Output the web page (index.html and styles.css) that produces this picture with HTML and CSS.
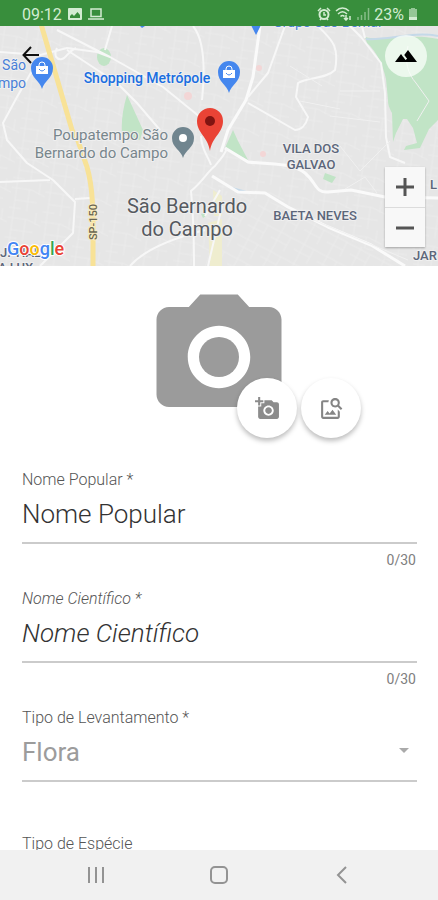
FILE: index.html
```html
<!DOCTYPE html>
<html lang="pt-BR">
<head>
  <meta charset="utf-8">
  <meta name="viewport" content="width=device-width, initial-scale=1">
  <title>Levantamento</title>
  <link rel="stylesheet" href="styles.css">
</head>
<body>
  <header class="status-bar">
    <div class="status-left">
      <span>09:12</span>
      <svg width="14" height="14" viewBox="0 0 14 14"><path fill="currentColor" fill-rule="evenodd" d="M1 1h12a1 1 0 0 1 1 1v10a1 1 0 0 1-1 1H1a1 1 0 0 1-1-1V2a1 1 0 0 1 1-1zM2 11h10V8L9.500 5 6 9 4 7 2 9z"/></svg>
      <svg width="16" height="14" viewBox="0 0 16 14"><path fill="none" stroke="currentColor" stroke-width="1.500" d="M3 2h10v7.500H3zM0 12h16"/></svg>
    </div>
    <div class="status-right">
      <svg width="14" height="14" viewBox="0 0 14 14"><circle cx="7" cy="7.500" r="4.500" fill="none" stroke="currentColor" stroke-width="2"/><path fill="none" stroke="currentColor" stroke-width="1.500" d="M1 4l3-3M13 4l-3-3M3 13l1.500-2M11 13l-1.500-2M7 5v3h2"/></svg>
      <svg width="17" height="14" viewBox="0 0 17 14"><path fill="none" stroke="currentColor" stroke-width="1.500" d="M1 4c4-4 9-4 13 0M3 7c3-3 6-3 9 0M5.500 9.500c1.500-1.500 2.500-1.500 4 0M11 8v5M9 11l2 2 2-2M15 13V9"/></svg>
      <svg width="14" height="14" viewBox="0 0 14 14"><path stroke="currentColor" stroke-width="1.500" opacity=".5" d="M2 13v-3M5.500 13V8M9 13V5M12.500 13V1"/></svg>
      <span>23%</span>
      <svg width="10" height="14" viewBox="0 0 10 14"><path fill="currentColor" opacity=".6" d="M3 1h4v1h2v11H1V2h2z"/><path fill="currentColor" d="M1 10h8v3H1z"/></svg>
    </div>
  </header>

  <main class="screen">
    <section class="map">
      <svg class="map-canvas" viewBox="0 0 438 240" preserveAspectRatio="xMidYMid slice">
        <defs>
          <pattern id="blocks" width="34" height="30" patternUnits="userSpaceOnUse" patternTransform="rotate(8)">
            <path class="street" d="M0 8h20l14 5M5 0v30M18 8v22M5 20h22M28 0v12M0 28h12"/>
          </pattern>
          <pattern id="blocks-tilt" width="26" height="22" patternUnits="userSpaceOnUse" patternTransform="rotate(28)">
            <path class="street" d="M0 6h26M0 15h18M7 0v22M18 6v16"/>
          </pattern>
        </defs>
        <rect class="land" width="438" height="240"/>
        <rect fill="url(#blocks)" width="438" height="240"/>
        <path class="land" d="M225 165l63 16 110 59H205z"/>
        <path fill="url(#blocks-tilt)" d="M225 165l63 16 110 59H205z"/>

        <!-- parks -->
        <path class="park" d="M365 11c20 5 45-4 73 2v81l-9 9-9 19-16 2 2-4 11-3-4-15-6-9h-4l-7 14-3 9-1-29c-3-6-4-8-4-13l-2-21c-3-14-9-27-19-36z"/>
        <path class="park" d="M127 69l16 35-3 10-18-6c-1-13 1-26 5-39zM233 104l5 11 10 19-23-12zM325 147l11 4-4 6-9-4zM201 188l6-2-1 4-3 2z"/>
        <ellipse class="park" cx="104" cy="31" rx="7" ry="9"/>
        <path class="water" d="M366 13c20 2 48-8 72-3M232 162l18 5h16"/>
        <path class="urban" d="M213 164l9 6v20h-8zM208 197l14-4v47h-12z"/>
        <circle class="rose" cx="188" cy="70" r="4"/>
        <circle class="rose" cx="259" cy="42" r="3"/>
        <circle class="rose" cx="263" cy="128" r="3"/>

        <!-- roads -->
        <path class="road" d="M0 26l40 3 27-7 30 4 13 5M57 4l53 27 53 30 37 30M67 24l50 33 20 20 23 27M112 0l-7 24M193 0c10 12 13 35 9 74M40 31L17 71 3 97l4 17 20 23 26 17 22 22-2 31-33 33M0 156l50-2M75 173l15-1M130 240c12-14 36-26 75-36M57 22c-4 8 0 12 5 11s6-8 14-11"/>
        <path class="road wide" d="M260 0l-7 51-7 23-18 30-7 22M225 122l23 14c28 3 45 1 57 11s10 20 23 19l23-2 34 7 53 1M212 150l26 16 27 1 23 14 40 20 43 18 34 21"/>
        <path class="road" d="M285 0l-17 47-20 24M318 0c12 13 22 18 17 44-9 9-27 7-37 13l-2 14 12 20c-2 8-7 13-13 13l-47-27M350 0l11 11 20 26 4 30 1 44 4 20 15 6M365 12L362 0M194 240c0-40-1-55-3-75 12-10 17-20 24-25 6-8 10-11 12-18M201 110c0 13 7 20 10 29M205 190l15-26M222 180l-14 60"/>
        <path class="road thin" d="M408 20c-4 15 0 28 8 37l13 18-12 20M290 40l32 20M300 75l40 8M340 65h40M330 90l50 6M340 120l20 25 30-30M345 163l20-12 12 16M290 184l118 50"/>
        <path class="highway" d="M41 -2l31 106 5 8 10 29c7 24 6 49 6 101"/>

        <!-- pins -->
        <g class="pin-blue">
          <path d="M42 63c-2-8-11-11-11-21a11 11 0 0 1 22 0c0 10-9 13-11 21z"/>
          <path d="M229 67c-2-8-11-11-11-21a11 11 0 0 1 22 0c0 10-9 13-11 21z"/>
          <path d="M251 -1h10l-5 10zM140 0h5l-3 2z"/>
        </g>
        <path class="pin-bag" d="M36 40h12v8H36zM223 44h12v8h-12z"/>
        <path class="pin-handle" d="M39 40v-1a3 3 0 0 1 6 0v1M226 44v-1a3 3 0 0 1 6 0v1"/>
        <path class="pin-smile" d="M39 43q3 4 6 0M226 47q3 4 6 0"/>
        <path class="pin-gray" d="M183 132c-2-8-11-10-11-20a11 11 0 0 1 22 0c0 10-9 12-11 20z"/>
        <circle cx="183" cy="112" r="4" fill="#fff"/>
        <path class="pin-red" d="M210 125c-2-14-13-18-13-30a13 13 0 0 1 26 0c0 12-11 16-13 30z"/>
        <circle cx="210" cy="95" r="5" fill="#811411"/>

        <!-- labels -->
        <g class="label place">
          <text x="26" y="44" text-anchor="end">São</text>
          <text x="26" y="62" text-anchor="end">mpo</text>
          <text class="strong" x="147" y="57" text-anchor="middle">Shopping Metrópole</text>
          <text x="273" y="1">Grupo São Bernar</text>
        </g>
        <g class="label office" text-anchor="end">
          <text x="168" y="114">Poupatempo São</text>
          <text x="168" y="132">Bernardo do Campo</text>
        </g>
        <g class="label city" text-anchor="middle">
          <text x="187" y="187">São Bernardo</text>
          <text x="187" y="210">do Campo</text>
        </g>
        <g class="label district">
          <text x="311" y="127" text-anchor="middle">VILA DOS</text>
          <text x="311" y="143" text-anchor="middle">GALVAO</text>
          <text x="315" y="194" text-anchor="middle">BAETA NEVES</text>
          <text x="430" y="163">L</text>
          <text x="413" y="234">JAR</text>
          <text x="0" y="231">J. TIAL</text>
          <text x="-2" y="246">A LUX</text>
        </g>
        <text class="label route" transform="translate(97 196) rotate(-90)" text-anchor="middle">SP-150</text>
        <text class="label google" x="7" y="229"><tspan fill="#4285f4">G</tspan><tspan fill="#ea4335">o</tspan><tspan fill="#fbbc05">o</tspan><tspan fill="#4285f4">g</tspan><tspan fill="#34a853">l</tspan><tspan fill="#ea4335">e</tspan></text>
      </svg>

      <button class="back-button" type="button" aria-label="Voltar">
        <svg width="18" height="18" viewBox="0 0 18 18"><path fill="none" stroke="#111" stroke-width="2" d="M17 9H2M9 1L1.500 9 9 17"/></svg>
      </button>
      <button class="terrain-button" type="button" aria-label="Relevo">
        <svg width="24" height="24" viewBox="0 0 24 24"><path d="M14 6l-3.750 5 2.850 3.800-1.600 1.200C9.810 13.750 7 10 7 10l-6 8h22z"/></svg>
      </button>
      <div class="zoom-control">
        <button type="button" aria-label="Aproximar"><svg width="18" height="18" viewBox="0 0 18 18"><path d="M0 9h18M9 0v18"/></svg></button>
        <button type="button" aria-label="Afastar"><svg width="18" height="18" viewBox="0 0 18 18"><path d="M0 9h18"/></svg></button>
      </div>
    </section>

    <section class="photo">
      <svg class="photo-empty" viewBox="0 0 24 24"><path d="M9 2L7.170 4H4c-1.100 0-2 .9-2 2v12c0 1.100.9 2 2 2h16c1.100 0 2-.9 2-2V6c0-1.100-.9-2-2-2h-3.170L15 2H9zm3 15c-2.760 0-5-2.240-5-5s2.240-5 5-5 5 2.240 5 5-2.240 5-5 5z"/><circle cx="12" cy="12" r="3.200"/></svg>
      <div class="photo-actions">
        <button class="fab" type="button" aria-label="Tirar foto">
          <svg width="25" height="25" viewBox="0 0 24 24"><path fill="#8c8c8c" d="M3 4V1h2v3h3v2H5v3H3V6H0V4h3zm3 6V7h3V4h7l1.830 2H21c1.100 0 2 .9 2 2v12c0 1.100-.9 2-2 2H5c-1.100 0-2-.9-2-2V10h3zm7 9c2.760 0 5-2.240 5-5s-2.240-5-5-5-5 2.240-5 5 2.240 5 5 5zm-3.200-5c0 1.770 1.430 3.200 3.200 3.200s3.200-1.430 3.200-3.200-1.430-3.200-3.200-3.200-3.200 1.430-3.200 3.200z"/></svg>
        </button>
        <button class="fab" type="button" aria-label="Escolher imagem">
          <svg width="25" height="25" viewBox="0 0 24 24"><path fill="#858585" d="M18 13v7H4V6h5.020c.05-.71.220-1.380.480-2H4c-1.100 0-2 .9-2 2v14c0 1.100.9 2 2 2h14c1.100 0 2-.9 2-2v-5l-2-2zm-1.500 5h-11l2.750-3.530 1.960 2.360 2.750-3.540zm2.800-9.110c.440-.7.700-1.510.700-2.390C20 4.010 17.990 2 15.500 2S11 4.010 11 6.500s2.010 4.500 4.490 4.500c.880 0 1.700-.26 2.390-.7L21 13.420 22.420 12 19.300 8.890zM15.500 9a2.500 2.500 0 1 1 0-5 2.500 2.500 0 0 1 0 5z"/></svg>
        </button>
      </div>
    </section>

    <form class="form">
      <div class="field">
        <label for="nome-popular">Nome Popular *</label>
        <input id="nome-popular" type="text" maxlength="30" placeholder="Nome Popular">
        <span class="counter">0/30</span>
      </div>
      <div class="field scientific">
        <label for="nome-cientifico">Nome Científico *</label>
        <input id="nome-cientifico" type="text" maxlength="30" placeholder="Nome Científico">
        <span class="counter">0/30</span>
      </div>
      <div class="field field-select">
        <label for="levantamento">Tipo de Levantamento *</label>
        <select id="levantamento" disabled>
          <option>Flora</option>
        </select>
      </div>
      <div class="field field-select">
        <label for="especie">Tipo de Espécie</label>
        <select id="especie"></select>
      </div>
    </form>
  </main>

  <nav class="nav-bar">
    <button type="button" aria-label="Recentes"><svg width="18" height="18" viewBox="0 0 18 18"><path d="M2 1v16M9 1v16M16 1v16"/></svg></button>
    <button type="button" aria-label="Início"><svg width="18" height="18" viewBox="0 0 18 18"><rect x="1" y="1" width="16" height="16" rx="4"/></svg></button>
    <button type="button" aria-label="Voltar"><svg width="18" height="18" viewBox="0 0 18 18"><path d="M13 1L5 9l8 8"/></svg></button>
  </nav>
</body>
</html>
```
FILE: styles.css
```css
* {
  box-sizing: border-box;
}

body {
  margin: 0;
  height: 100vh;
  display: flex;
  flex-direction: column;
  background: #fff;
  font-family: Roboto, "Liberation Sans", sans-serif;
}

button {
  border: 0;
  padding: 0;
  background: none;
  display: flex;
  align-items: center;
  justify-content: center;
}

/* status bar */
.status-bar {
  flex: none;
  height: 26px;
  padding: 2px 20px 0 22px;
  display: flex;
  align-items: center;
  justify-content: space-between;
  background: #388e3c;
  color: #d3ecd2;
  font-size: 16px;
}

.status-left {
  display: flex;
  align-items: center;
  gap: 6px;
}

.status-right {
  display: flex;
  align-items: center;
  gap: 4px;
}

.screen {
  flex: 1;
  min-height: 0;
  overflow-y: auto;
  scrollbar-width: none;
}

/* map */
.map {
  position: relative;
  height: 240px;
  overflow: hidden;
}

.map-canvas {
  display: block;
  width: 100%;
  height: 100%;
}

.land {
  fill: #e6e6e6;
}

.street {
  fill: none;
  stroke: #ebebeb;
  stroke-width: 1;
}

.park {
  fill: #c1e4c6;
}

.urban {
  fill: #efedcf;
}

.rose {
  fill: #f3d6d6;
}

.water {
  fill: none;
  stroke: #c5d9e8;
  stroke-width: 2;
}

.road {
  fill: none;
  stroke: #f7f7f7;
  stroke-width: 2;
  stroke-linejoin: round;
}

.road.wide {
  stroke: #fafafa;
  stroke-width: 3;
}

.road.thin {
  stroke: #f0f0f0;
  stroke-width: 1;
}

.highway {
  fill: none;
  stroke: #f8e297;
  stroke-width: 5;
}

.pin-blue {
  fill: #4587ee;
}

.pin-bag {
  fill: #fff;
}

.pin-handle {
  fill: none;
  stroke: #fff;
  stroke-width: 1;
}

.pin-smile {
  fill: none;
  stroke: #4587ee;
  stroke-width: 1;
}

.pin-gray {
  fill: #70858f;
}

.pin-red {
  fill: #ea4335;
}

.label {
  paint-order: stroke;
  stroke: #f0f0f0;
  stroke-width: 2px;
  stroke-linejoin: round;
}

.place {
  fill: #4a80d8;
  font-size: 14px;
}

.strong {
  fill: #1a6ee0;
  font-weight: 500;
}

.office {
  fill: #78868c;
  font-size: 15px;
}

.city {
  fill: #565a60;
  font-size: 20px;
}

.district {
  fill: #5c667a;
  font-size: 13px;
  font-weight: 500;
}

.route {
  fill: #6b6650;
  font-size: 11px;
  font-weight: 500;
  stroke: #f9ecc0;
}

.google {
  font-size: 18px;
  font-weight: 500;
  stroke: #fff;
}

.back-button {
  position: absolute;
  top: 14px;
  left: 16px;
  width: 30px;
  height: 30px;
}

.terrain-button {
  position: absolute;
  top: 9px;
  right: 11px;
  width: 42px;
  height: 42px;
  border-radius: 50%;
  background: rgba(250, 255, 250, 0.75);
}

.zoom-control {
  position: absolute;
  right: 13px;
  bottom: 19px;
  width: 40px;
  background: #f8f8f8;
  box-shadow: 0 1px 2px rgba(0, 0, 0, 0.3);
}

.zoom-control button {
  width: 100%;
  height: 40px;
}

.zoom-control button + button {
  border-top: 1px solid #dcdcdc;
}

.zoom-control path {
  stroke: #555;
  stroke-width: 3;
}

/* photo */
.photo {
  position: relative;
  display: flex;
  justify-content: center;
  padding: 16px 0 38px;
}

.photo-empty {
  width: 150px;
  height: 150px;
  fill: #9b9b9b;
}

.photo-actions {
  position: absolute;
  top: 112px;
  left: 50%;
  margin-left: 18px;
  display: flex;
  gap: 4px;
}

.fab {
  width: 60px;
  height: 60px;
  border-radius: 50%;
  background: #fff;
  box-shadow: 0 3px 5px rgba(0, 0, 0, 0.26);
}

/* form */
.form {
  padding: 0 21px 0 22px;
}

.field {
  display: flex;
  flex-direction: column;
  margin-bottom: 21px;
}

.field label {
  color: #7a7a7a;
  font-size: 16px;
  font-weight: 300;
  line-height: 20px;
}

.field input,
.field select {
  width: 100%;
  height: 54px;
  margin: 0;
  padding: 0 0 4px;
  border: 0;
  border-bottom: 2px solid #cbcbcb;
  border-radius: 0;
  outline: 0;
  background: transparent;
  color: #424242;
  font-family: inherit;
  font-size: 26px;
  font-weight: 300;
}

.field input::placeholder {
  color: #333;
  opacity: 1;
}

.field label {
  color: #555;
}

.scientific label,
.scientific input {
  font-style: italic;
}

.counter {
  margin-top: 8px;
  padding-right: 1px;
  color: #808080;
  font-size: 14px;
  line-height: 16px;
  text-align: right;
}

.field-select {
  position: relative;
  margin-bottom: 52px;
}

.field select {
  appearance: none;
  font-weight: 400;
}

.field select:disabled {
  color: #9c9c9c;
  opacity: 1;
}

.field-select::after {
  content: "";
  position: absolute;
  top: 40px;
  right: 8px;
  border: 5px solid transparent;
  border-top-color: #aaa;
  border-bottom: 0;
}

/* navigation */
.nav-bar {
  flex: none;
  height: 50px;
  padding: 0 35px;
  display: grid;
  grid-template-columns: repeat(3, 1fr);
  background: #f1f1f1;
}

.nav-bar svg {
  fill: none;
  stroke: #939393;
  stroke-width: 2;
}
```
